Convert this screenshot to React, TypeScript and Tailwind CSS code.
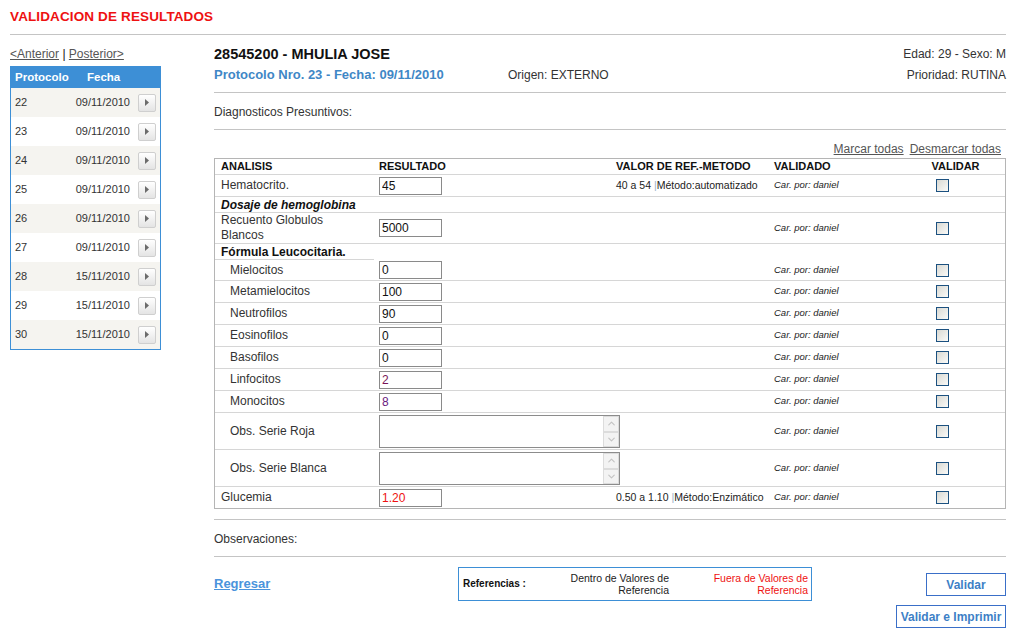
import { ChevronUp, ChevronDown } from "lucide-react";

const protocolos = [
  ["22", "09/11/2010"],
  ["23", "09/11/2010"],
  ["24", "09/11/2010"],
  ["25", "09/11/2010"],
  ["26", "09/11/2010"],
  ["27", "09/11/2010"],
  ["28", "15/11/2010"],
  ["29", "15/11/2010"],
  ["30", "15/11/2010"],
];

type Fila = {
  tipo: "item" | "grupo" | "obs";
  nombre: string;
  h: string;
  valor?: string;
  color?: string;
  ref?: string;
  metodo?: string;
  sub?: boolean;
  italic?: boolean;
  parcial?: boolean;
  ultimo?: boolean;
};

const filas: Fila[] = [
  { tipo: "item", nombre: "Hematocrito.", h: "h-[22px]", valor: "45", ref: "40 a 54", metodo: "automatizado" },
  { tipo: "grupo", nombre: "Dosaje de hemoglobina", h: "h-[16px]", italic: true },
  { tipo: "item", nombre: "Recuento Globulos\nBlancos", h: "h-[31px]", valor: "5000" },
  { tipo: "grupo", nombre: "Fórmula Leucocitaria.", h: "h-[16px]", parcial: true },
  { tipo: "item", nombre: "Mielocitos", h: "h-[21px]", valor: "0", sub: true },
  { tipo: "item", nombre: "Metamielocitos", h: "h-[22px]", valor: "100", sub: true },
  { tipo: "item", nombre: "Neutrofilos", h: "h-[22px]", valor: "90", sub: true },
  { tipo: "item", nombre: "Eosinofilos", h: "h-[22px]", valor: "0", sub: true },
  { tipo: "item", nombre: "Basofilos", h: "h-[22px]", valor: "0", sub: true },
  { tipo: "item", nombre: "Linfocitos", h: "h-[22px]", valor: "2", sub: true, color: "text-[#7a1458]" },
  { tipo: "item", nombre: "Monocitos", h: "h-[22px]", valor: "8", sub: true, color: "text-[#6a1a80]" },
  { tipo: "obs", nombre: "Obs. Serie Roja", h: "h-[37px]", sub: true },
  { tipo: "obs", nombre: "Obs. Serie Blanca", h: "h-[37px]", sub: true },
  { tipo: "item", nombre: "Glucemia", h: "h-[21px]", valor: "1.20", color: "text-[#ee1111]", ref: "0.50 a 1.10", metodo: "Enzimático", ultimo: true },
];

function Flecha() {
  return (
    <span className="w-[18px] h-[18px] border border-[#cfcfcf] rounded-[2px] bg-linear-to-b from-white to-[#e4e4e4] flex items-center justify-center">
      <svg width="4" height="7" viewBox="0 0 4 7">
        <path d="M0 0 L4 3.5 L0 7 Z" fill="#6b6b6b" />
      </svg>
    </span>
  );
}

function Casilla() {
  return <span className="block w-[13px] h-[13px] border border-[#1c5180] bg-linear-to-br from-[#d9d9d3] to-[#fafaf8]" />;
}

function AreaTexto() {
  return (
    <div className="w-[241px] h-[33px] border border-[#8c8c8c] bg-white flex justify-end">
      <div className="w-[16px] flex flex-col">
        <span className="h-[16px] border border-[#dcdcdc] bg-[#f3f3f3] flex items-center justify-center">
          <ChevronUp size={11} strokeWidth={2.5} className="text-[#c4c4c4]" />
        </span>
        <span className="h-[15px] border border-[#dcdcdc] bg-[#f3f3f3] flex items-center justify-center">
          <ChevronDown size={11} strokeWidth={2.5} className="text-[#c4c4c4]" />
        </span>
      </div>
    </div>
  );
}

function FilaAnalisis({ f }: { f: Fila }) {
  const borde = f.ultimo || f.parcial ? "" : "border-b border-[#d6d6d6]";
  const pl = f.sub ? "pl-[15px]" : "pl-[6px]";

  if (f.tipo === "grupo") {
    return (
      <div className={`flex ${f.h} ${borde}`}>
        <div
          className={`w-[159px] flex items-center ${pl} font-bold text-[#111] ${f.italic ? "italic" : ""} ${
            f.parcial ? "border-b border-[#d6d6d6]" : ""
          }`}
        >
          {f.nombre}
        </div>
      </div>
    );
  }

  return (
    <div className={`flex items-center ${f.h} ${borde}`}>
      <div className={`w-[162px] shrink-0 ${pl} leading-[15px] whitespace-pre-line`}>{f.nombre}</div>
      <div className="w-[236px] shrink-0 pl-[2px]">
        {f.tipo === "obs" ? (
          <AreaTexto />
        ) : (
          <input
            readOnly
            value={f.valor}
            className={`block w-[63px] h-[18px] border border-[#8a8a8a] bg-white px-[2px] text-[12px] outline-none ${
              f.color ?? "text-[#111]"
            }`}
          />
        )}
      </div>
      <div className="w-[158px] shrink-0 pl-[3px] text-[10.5px] text-[#222] whitespace-nowrap">
        {f.ref && (
          <>
            {f.ref} <span className="text-[#9ab0cc]">|</span>Método:{f.metodo}
          </>
        )}
      </div>
      <div className="w-[135px] shrink-0 pl-[3px] text-[9.5px] italic text-[#222]">Car. por: daniel</div>
      <div className="flex-1 pl-[30px]">
        <Casilla />
      </div>
    </div>
  );
}

export default function App() {
  return (
    <div className="w-[1016px] min-h-[635px] bg-white px-[10px] font-['Liberation_Sans',Arial,sans-serif] text-[12px] text-[#333]">
      <h1 className="pt-[9px] leading-[16px] text-[13.5px] tracking-[0.125px] font-bold text-[#ee1111]">
        VALIDACION DE RESULTADOS
      </h1>
      <div className="mt-[9px] border-t border-[#c4c4c4]" />

      <div className="flex gap-[53px]">
        {/* Lista de protocolos */}
        <div className="w-[151px] shrink-0">
          <div className="mt-[11px] leading-[16px] text-[#555]">
            <a className="underline">&lt;Anterior</a> <span className="text-[#111]">|</span>{" "}
            <a className="underline">Posterior&gt;</a>
          </div>
          <div className="mt-[4px] border border-[#3d8fd6] text-[11px]">
            <div className="flex items-center h-[21px] bg-[#3d8fd6] text-white font-bold text-[11.5px]">
              <span className="pl-[4px] w-[76px]">Protocolo</span>
              <span>Fecha</span>
            </div>
            {protocolos.map(([n, f], i) => (
              <div key={n} className={`flex items-center h-[29px] ${i % 2 === 0 ? "bg-[#f5f4f0]" : "bg-white"}`}>
                <span className="pl-[4px] flex-1">{n}</span>
                <span>{f}</span>
                <span className="ml-[8px] mr-[4px]">
                  <Flecha />
                </span>
              </div>
            ))}
          </div>
        </div>

        {/* Contenido principal */}
        <div className="flex-1">
          <div className="mt-[10px] flex items-center justify-between leading-[18px]">
            <span className="text-[14.5px] font-bold text-[#111]">28545200 - MHULIA JOSE</span>
            <span>Edad: 29 - Sexo: M</span>
          </div>
          <div className="mt-[3px] flex items-center leading-[18px]">
            <span className="w-[294px] text-[13px] font-bold text-[#3f87c6]">Protocolo Nro. 23 - Fecha: 09/11/2010</span>
            <span>Origen: EXTERNO</span>
            <span className="ml-auto">Prioridad: RUTINA</span>
          </div>
          <div className="mt-[8px] border-t border-[#c4c4c4]" />
          <div className="pt-[11px] leading-[16px]">Diagnosticos Presuntivos:</div>
          <div className="mt-[9px] border-t border-[#c4c4c4]" />
          <div className="pt-[11px] leading-[16px] flex justify-end gap-[6px] pr-[5px] text-[#555]">
            <a className="underline">Marcar todas</a>
            <a className="underline">Desmarcar todas</a>
          </div>

          <div className="mt-[1px] border border-[#b5b5b5]">
            <div className="flex items-center h-[16px] border-b border-[#d6d6d6] text-[11px] font-bold text-[#111]">
              <div className="w-[162px] pl-[6px]">ANALISIS</div>
              <div className="w-[236px] pl-[2px]">RESULTADO</div>
              <div className="w-[158px] pl-[3px]">VALOR DE REF.-METODO</div>
              <div className="w-[135px] pl-[3px]">VALIDADO</div>
              <div className="flex-1 text-center">VALIDAR</div>
            </div>
            {filas.map((f) => (
              <FilaAnalisis key={f.nombre} f={f} />
            ))}
          </div>

          <div className="mt-[10px] border-t border-[#c4c4c4]" />
          <div className="pt-[11px] leading-[16px]">Observaciones:</div>
          <div className="mt-[9px] border-t border-[#c4c4c4]" />

          <div className="flex items-start">
            <div className="w-[244px] mt-[19px] leading-[16px]">
              <a className="text-[13px] font-bold underline text-[#4a93dc]">Regresar</a>
            </div>
            <div className="mt-[10px] w-[354px] h-[34px] border border-[#3d8fd6] flex items-center text-[10.5px] leading-[12.5px]">
              <div className="w-[110px] pl-[4px] font-bold text-[10px] text-[#111]">Referencias :</div>
              <div className="w-[100px] text-right text-[#222]">
                Dentro de Valores de
                <br />
                Referencia
              </div>
              <div className="flex-1 text-right pr-[3px] text-[#ee1111]">
                Fuera de Valores de
                <br />
                Referencia
              </div>
            </div>
            <div className="ml-auto mt-[16px] flex flex-col items-end gap-[9px]">
              <button className="w-[80px] h-[23px] border border-[#3a6fc8] bg-white text-[12px] font-bold text-[#3d7fc6]">
                Validar
              </button>
              <button className="w-[110px] h-[23px] border border-[#3a6fc8] bg-white text-[12px] font-bold text-[#3d7fc6]">
                Validar e Imprimir
              </button>
            </div>
          </div>
        </div>
      </div>
    </div>
  );
}
